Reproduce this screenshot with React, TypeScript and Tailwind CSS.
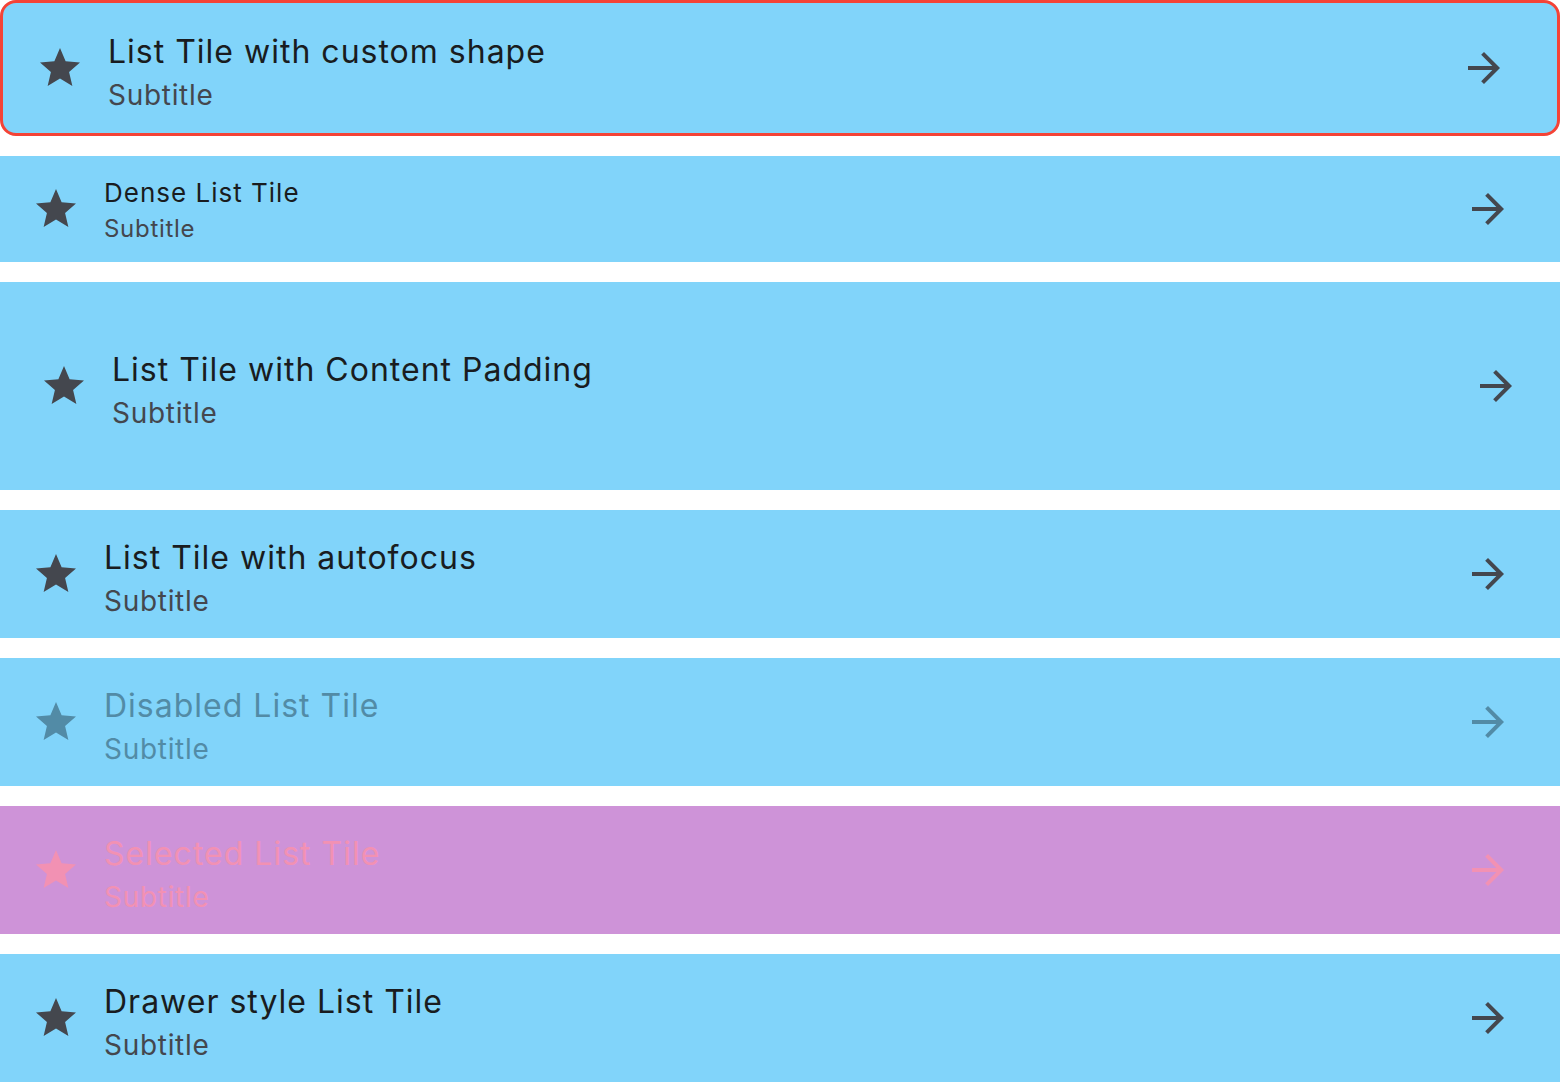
import React from "react";

const Star = ({ className }: { className?: string }) => (
  <svg viewBox="0 0 24 24" className={className} fill="currentColor">
    <path d="M12 17.27L18.18 21l-1.64-7.03L22 9.24l-7.19-.61L12 2 9.19 8.63 2 9.24l5.46 4.73L5.82 21z" />
  </svg>
);

const Arrow = ({ className }: { className?: string }) => (
  <svg viewBox="0 0 24 24" className={className} fill="currentColor">
    <path d="M12 4l-1.41 1.41L16.17 11H4v2h12.17l-5.58 5.59L12 20l8-8z" />
  </svg>
);

type TileProps = {
  title: string;
  outer: string;
  titleCls: string;
  subCls: string;
  iconCls: string;
  textShift?: string;
  subShift?: string;
};

const Tile = ({
  title,
  outer,
  titleCls,
  subCls,
  iconCls,
  textShift = "mt-[6px]",
  subShift = "-mt-[1px]",
}: TileProps) => (
  <div className={`flex items-center ${outer}`}>
    <div className={`w-[48px] h-[48px] shrink-0 ${iconCls}`}>
      <Star className="w-[48px] h-[48px]" />
    </div>
    <div className={`flex-1 flex flex-col ml-[24px] ${textShift}`}>
      <div className={titleCls}>{title}</div>
      <div className={`${subShift} ${subCls}`}>Subtitle</div>
    </div>
    <div className={`w-[48px] h-[48px] shrink-0 ${iconCls}`}>
      <Arrow className="w-[48px] h-[48px]" />
    </div>
  </div>
);

export default function App() {
  const font = "font-['Inter','Liberation_Sans',sans-serif]";
  const tNorm = "text-[32px] leading-[48px] tracking-[1px] text-[#191c20]";
  const sNorm = "text-[28px] leading-[40px] tracking-[0.7px] text-[#44474e]";
  const iNorm = "text-[#44474e]";
  return (
    <div className={`w-[1560px] h-[1082px] bg-white flex flex-col gap-[20px] ${font}`}>
      <Tile
        title="List Tile with custom shape"
        outer="h-[136px] bg-[#81d4fa] border-[3px] border-[#f44336] rounded-[16px] pl-[33px] pr-[49px]"
        titleCls={tNorm}
        subCls={sNorm}
        iconCls={iNorm}
      />
      <Tile
        title="Dense List Tile"
        outer="h-[106px] bg-[#81d4fa] pl-[32px] pr-[48px]"
        titleCls="text-[26px] leading-[36px] tracking-[1px] text-[#191c20]"
        subCls="text-[24px] leading-[34px] tracking-[0.7px] text-[#44474e]"
        iconCls={iNorm}
        textShift="mt-[2px]"
        subShift="mt-[1px]"
      />
      <Tile
        title="List Tile with Content Padding"
        outer="h-[208px] bg-[#81d4fa] pl-[40px] pr-[40px]"
        titleCls={tNorm}
        subCls={sNorm}
        iconCls={iNorm}
      />
      <Tile
        title="List Tile with autofocus"
        outer="h-[128px] bg-[#81d4fa] pl-[32px] pr-[48px]"
        titleCls={tNorm}
        subCls={sNorm}
        iconCls={iNorm}
      />
      <Tile
        title="Disabled List Tile"
        outer="h-[128px] bg-[#81d4fa] pl-[32px] pr-[48px]"
        titleCls="text-[32px] leading-[48px] tracking-[1px] text-[#528ba6]"
        subCls="text-[28px] leading-[40px] tracking-[0.7px] text-[#528ba6]"
        iconCls="text-[#528ba6]"
      />
      <Tile
        title="Selected List Tile"
        outer="h-[128px] bg-[#ce93d8] pl-[32px] pr-[48px]"
        titleCls="text-[32px] leading-[48px] tracking-[1px] text-[#f291b3]"
        subCls="text-[28px] leading-[40px] tracking-[0.7px] text-[#f291b3]"
        iconCls="text-[#f291b3]"
      />
      <Tile
        title="Drawer style List Tile"
        outer="h-[128px] bg-[#81d4fa] pl-[32px] pr-[48px]"
        titleCls={tNorm}
        subCls={sNorm}
        iconCls={iNorm}
      />
    </div>
  );
}
